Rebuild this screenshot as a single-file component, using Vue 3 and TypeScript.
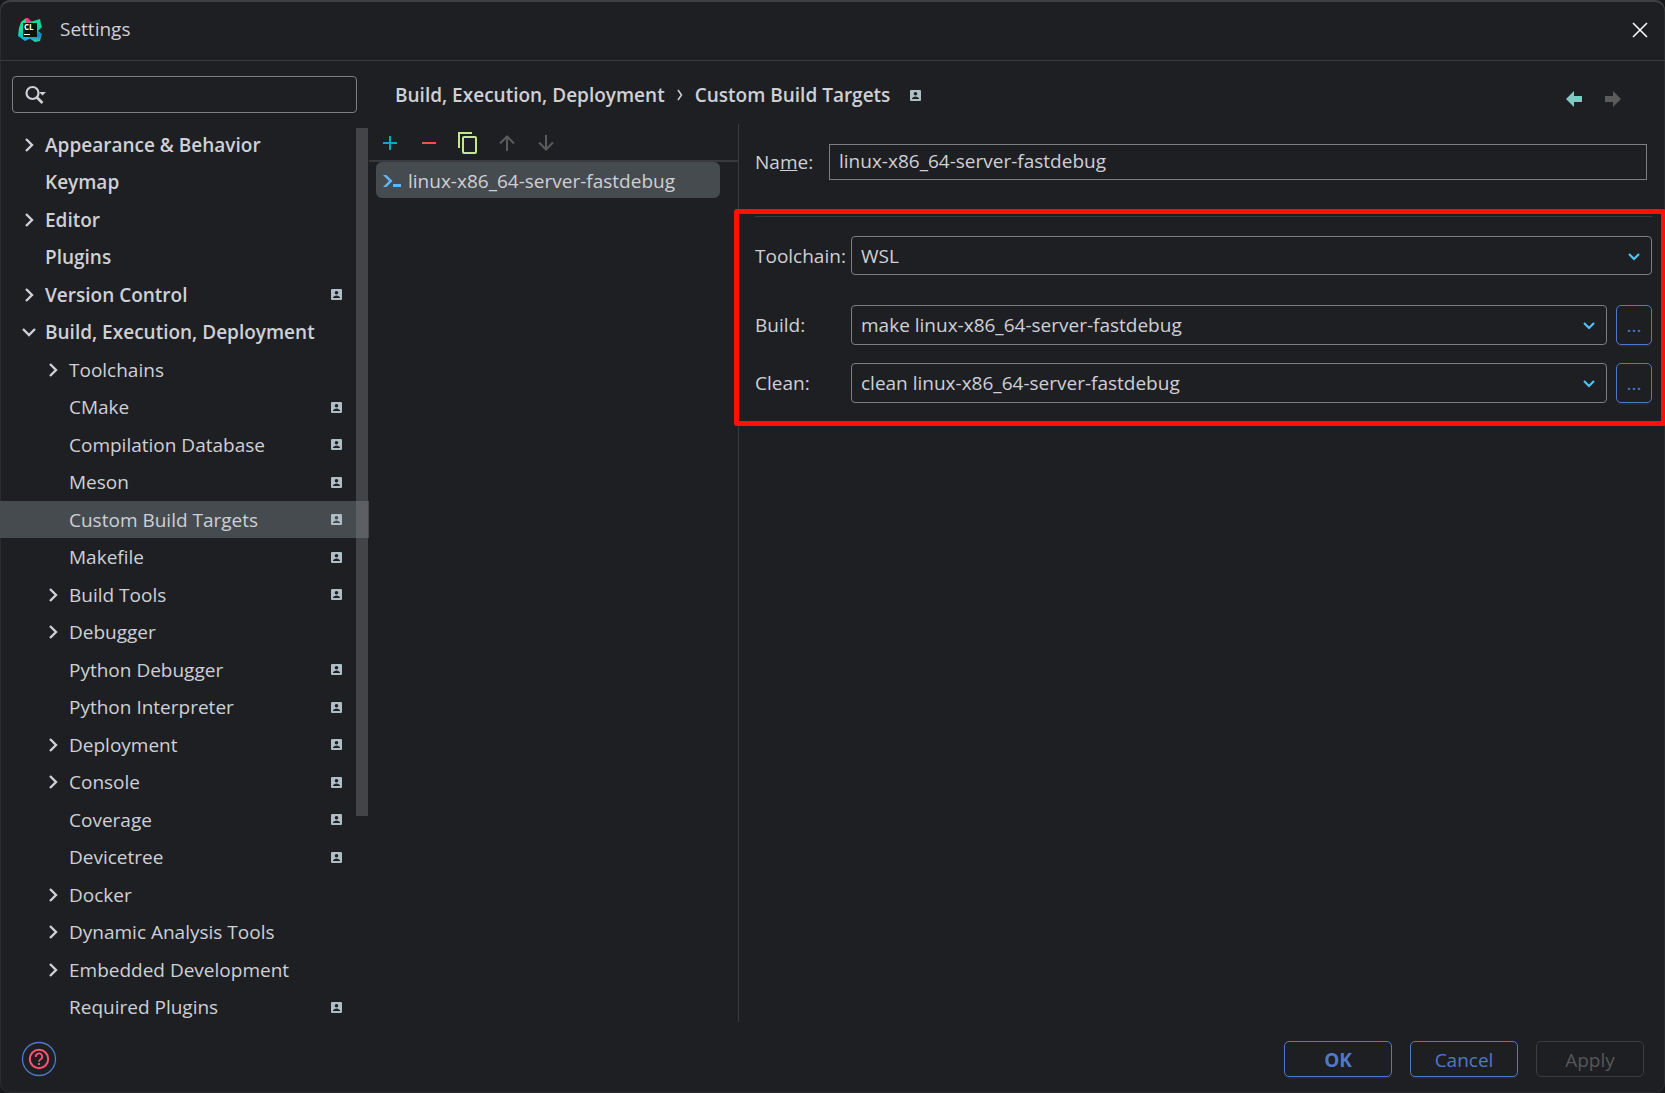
<script setup lang="ts">
import { ref } from 'vue'

interface TreeItem {
  label: string
  level: 0 | 1
  arrow?: 'open' | 'closed'
  badge?: boolean
}

const items: TreeItem[] = [
  { label: 'Appearance & Behavior', level: 0, arrow: 'closed' },
  { label: 'Keymap', level: 0 },
  { label: 'Editor', level: 0, arrow: 'closed' },
  { label: 'Plugins', level: 0 },
  { label: 'Version Control', level: 0, arrow: 'closed', badge: true },
  { label: 'Build, Execution, Deployment', level: 0, arrow: 'open' },
  { label: 'Toolchains', level: 1, arrow: 'closed' },
  { label: 'CMake', level: 1, badge: true },
  { label: 'Compilation Database', level: 1, badge: true },
  { label: 'Meson', level: 1, badge: true },
  { label: 'Custom Build Targets', level: 1, badge: true },
  { label: 'Makefile', level: 1, badge: true },
  { label: 'Build Tools', level: 1, arrow: 'closed', badge: true },
  { label: 'Debugger', level: 1, arrow: 'closed' },
  { label: 'Python Debugger', level: 1, badge: true },
  { label: 'Python Interpreter', level: 1, badge: true },
  { label: 'Deployment', level: 1, arrow: 'closed', badge: true },
  { label: 'Console', level: 1, arrow: 'closed', badge: true },
  { label: 'Coverage', level: 1, badge: true },
  { label: 'Devicetree', level: 1, badge: true },
  { label: 'Docker', level: 1, arrow: 'closed' },
  { label: 'Dynamic Analysis Tools', level: 1, arrow: 'closed' },
  { label: 'Embedded Development', level: 1, arrow: 'closed' },
  { label: 'Required Plugins', level: 1, badge: true },
]

const selected = ref('Custom Build Targets')
const query = ref('')
const name = ref('linux-x86_64-server-fastdebug')
const toolchain = ref('WSL')
const commands = ref([
  { id: 'build', label: 'Build:', value: 'make linux-x86_64-server-fastdebug' },
  { id: 'clean', label: 'Clean:', value: 'clean linux-x86_64-server-fastdebug' },
])
</script>

<template>
  <div class="window">
    <header class="titlebar">
      <svg class="logo" viewBox="0 0 24 24" aria-hidden="true">
        <defs>
          <linearGradient id="lg-left" x1="0" y1="0" x2="0" y2="1">
            <stop offset="0" stop-color="#21e07c" />
            <stop offset="0.55" stop-color="#16dca0" />
            <stop offset="1" stop-color="#12a5ee" />
          </linearGradient>
          <linearGradient id="lg-right" x1="0" y1="0" x2="0" y2="1">
            <stop offset="0" stop-color="#1fdc86" />
            <stop offset="0.5" stop-color="#14c6a0" />
            <stop offset="0.7" stop-color="#0a7fe0" />
            <stop offset="1" stop-color="#1fe3a0" />
          </linearGradient>
        </defs>
        <path d="M3 4 L8 0 L13 4 L13 20 L7 23 L0 18 L1 10 Z" fill="url(#lg-left)" />
        <path d="M12 4 L22 1 L23 6 L24 9 L20 13 L24 16 L22 23 L17 24 L11 20 Z" fill="url(#lg-right)" />
        <path d="M8 0 L10 0 L14 4 L8 5 Z" fill="#ff318c" />
        <rect x="5" y="5" width="14" height="14" fill="#061410" />
        <text x="6" y="12" class="logo-text">CL</text>
        <rect x="6" y="16" width="6" height="1" fill="#fff" />
      </svg>
      <h1 class="title">Settings</h1>
      <button class="icon-btn close" aria-label="Close">
        <svg width="16" height="16" viewBox="0 0 16 16"><path d="M1 1 L15 15 M15 1 L1 15" stroke="#fff" stroke-width="1.5" /></svg>
      </button>
    </header>

    <div class="body">
      <aside class="sidebar">
        <div class="search">
          <svg width="22" height="20" viewBox="0 0 22 20" aria-hidden="true">
            <circle cx="7.5" cy="8" r="6" fill="none" stroke="#ced0d6" stroke-width="2.2" />
            <path d="M11.5 12 L17.500 18" stroke="#ced0d6" stroke-width="2.600" />
            <path d="M14 7 H21 L17.500 10.500 Z" fill="#ced0d6" />
          </svg>
          <input v-model="query" type="search" aria-label="Search settings" />
        </div>
        <div class="tree-area">
          <ul class="tree">
            <li v-for="item in items" :key="item.label">
              <button
                class="row"
                :class="{ child: item.level === 1, selected: item.label === selected }"
                @click="selected = item.label"
              >
                <span class="arrow">
                  <svg v-if="item.arrow" width="14" height="14" viewBox="0 0 14 14" :class="{ open: item.arrow === 'open' }">
                    <path d="M4 1 L10 7 L4 13" fill="none" stroke="#ced0d6" stroke-width="2.400" />
                  </svg>
                </span>
                <span class="row-label">{{ item.label }}</span>
                <svg v-if="item.badge" class="badge" viewBox="0 0 11 11">
                  <path
                    fill-rule="evenodd"
                    d="M1 0 H10 Q11 0 11 1 V10 Q11 11 10 11 H1 Q0 11 0 10 V1 Q0 0 1 0 Z M5.500 2 A1.800 1.800 0 1 0 5.500 5.600 A1.800 1.800 0 1 0 5.500 2 Z M2 9 H9 V8.200 Q7.500 6.600 5.500 6.600 Q3.500 6.600 2 8.200 Z"
                    fill="#afbdc4"
                  />
                </svg>
              </button>
            </li>
          </ul>
          <div class="scrollbar"></div>
        </div>
      </aside>

      <main class="main">
        <div class="crumbs">
          <h2>Build, Execution, Deployment</h2>
          <svg width="6" height="12" viewBox="0 0 6 12" aria-hidden="true">
            <path d="M1 1 L4.500 6 L1 11" fill="none" stroke="#ced0d6" stroke-width="1.5" />
          </svg>
          <h2>Custom Build Targets</h2>
          <svg class="badge" viewBox="0 0 11 11" aria-hidden="true">
            <path
              fill-rule="evenodd"
              d="M1 0 H10 Q11 0 11 1 V10 Q11 11 10 11 H1 Q0 11 0 10 V1 Q0 0 1 0 Z M5.500 2 A1.800 1.800 0 1 0 5.500 5.600 A1.800 1.800 0 1 0 5.500 2 Z M2 9 H9 V8.200 Q7.500 6.600 5.500 6.600 Q3.500 6.600 2 8.200 Z"
              fill="#afbdc4"
            />
          </svg>
          <div class="history">
            <button class="icon-btn" aria-label="Back">
              <svg width="16" height="16" viewBox="0 0 16 16"><path d="M0 8 L8 0 V5 H16 V11 H8 V16 Z" fill="#80cbc4" /></svg>
            </button>
            <button class="icon-btn" aria-label="Forward" disabled>
              <svg width="16" height="16" viewBox="0 0 16 16"><path d="M16 8 L8 0 V5 H0 V11 H8 V16 Z" fill="#5b5b5b" /></svg>
            </button>
          </div>
        </div>

        <div class="panes">
          <section class="targets">
            <div class="toolbar">
              <button class="icon-btn" aria-label="Add">
                <svg width="22" height="22" viewBox="0 0 22 22"><path d="M4 11 H18 M11 4 V18" stroke="#00acc1" stroke-width="2" /></svg>
              </button>
              <button class="icon-btn" aria-label="Remove">
                <svg width="22" height="22" viewBox="0 0 22 22"><path d="M4 11 H18" stroke="#ef5350" stroke-width="2" /></svg>
              </button>
              <button class="icon-btn" aria-label="Copy">
                <svg width="22" height="22" viewBox="0 0 22 22">
                  <path d="M2 16 V1 H15" fill="none" stroke="#c3e887" stroke-width="2" />
                  <rect x="6" y="5" width="13" height="16" rx="1" fill="none" stroke="#c3e887" stroke-width="2" />
                </svg>
              </button>
              <button class="icon-btn" aria-label="Move up" disabled>
                <svg width="22" height="22" viewBox="0 0 22 22"><path d="M11 19 V5 M4 11.500 L11 4.500 L18 11.500" fill="none" stroke="#5b5b5b" stroke-width="2" /></svg>
              </button>
              <button class="icon-btn" aria-label="Move down" disabled>
                <svg width="22" height="22" viewBox="0 0 22 22"><path d="M11 3 V17 M4 10.500 L11 17.500 L18 10.500" fill="none" stroke="#5b5b5b" stroke-width="2" /></svg>
              </button>
            </div>
            <button class="target">
              <svg width="18" height="14" viewBox="0 0 18 14" aria-hidden="true">
                <path d="M0 1 H3.500 L9.500 7 L3.500 13 H0 L6 7 Z" fill="#64b5f6" />
                <rect x="10" y="10" width="8" height="3" fill="#64b5f6" />
              </svg>
              <span>{{ name }}</span>
            </button>
          </section>

          <form class="form" @submit.prevent>
            <div class="name-row">
              <label for="name">Na<u>m</u>e:</label>
              <input id="name" v-model="name" type="text" />
            </div>
            <div class="marked">
              <hr />
              <div class="field">
                <label for="toolchain">Toolchain:</label>
                <div class="combo">
                  <select id="toolchain" v-model="toolchain">
                    <option>WSL</option>
                  </select>
                  <svg class="caret" viewBox="0 0 12 8"><path d="M1 1 L6 6 L11 1" fill="none" stroke="#4fc3f7" stroke-width="2.200" /></svg>
                </div>
              </div>
              <div v-for="cmd in commands" :key="cmd.id" class="field command">
                <label :for="cmd.id">{{ cmd.label }}</label>
                <div class="combo">
                  <select :id="cmd.id" v-model="cmd.value">
                    <option>{{ cmd.value }}</option>
                  </select>
                  <svg class="caret" viewBox="0 0 12 8"><path d="M1 1 L6 6 L11 1" fill="none" stroke="#4fc3f7" stroke-width="2.200" /></svg>
                </div>
                <button type="button" class="browse">...</button>
              </div>
            </div>
          </form>
        </div>
      </main>
    </div>

    <footer class="footer">
      <button class="icon-btn" aria-label="Help">
        <svg width="36" height="36" viewBox="0 0 36 36">
          <circle cx="18" cy="18" r="16.500" fill="none" stroke="#5078cb" stroke-width="1.3" />
          <circle cx="18" cy="18" r="9.200" fill="none" stroke="#ff5370" stroke-width="2" />
          <path d="M14.800 16 A3.200 3.200 0 1 1 19.700 18.300 Q18 19.300 18 20.800" fill="none" stroke="#ff5370" stroke-width="1.800" />
          <rect x="17" y="22" width="2" height="2" fill="#ff5370" />
        </svg>
      </button>
      <div class="actions">
        <button class="btn default">OK</button>
        <button class="btn">Cancel</button>
        <button class="btn" disabled>Apply</button>
      </div>
    </footer>
  </div>
</template>

<style>
body {
  margin: 0;
  background: #17181a;
}
</style>

<style scoped>
.window,
.window * {
  box-sizing: border-box;
}

.window {
  display: flex;
  flex-direction: column;
  min-height: 100vh;
  overflow: hidden;
  color: #ced0d6;
  background: #1e1f23;
  border-radius: 10px;
  box-shadow: inset 0 2px 0 #3f4042, inset 0 0 0 1px #2b2c2f;
  font-family: "Open Sans", "Noto Sans", sans-serif;
  font-size: 19px;
  line-height: 26px;
}

button,
input,
select {
  font: inherit;
  color: inherit;
}

button {
  padding: 0;
  background: none;
  border: none;
}

.icon-btn {
  display: flex;
}

svg {
  display: block;
  flex: none;
}

/* Title bar */
.titlebar {
  display: flex;
  align-items: center;
  height: 61px;
  padding: 0 17px 0 18px;
  border-bottom: 1px solid #393a3d;
}

.logo {
  width: 24px;
  height: 24px;
}

.logo-text {
  font-size: 8px;
  font-weight: 700;
  fill: #fff;
}

.title {
  margin: 0 0 0 18px;
  padding-bottom: 2px;
  font-size: 19px;
  font-weight: 400;
}

.close {
  margin-left: auto;
}

.body {
  display: flex;
  flex: 1;
}

/* Settings tree */
.sidebar {
  width: 369px;
  flex: none;
  padding-top: 15px;
}

.search {
  display: flex;
  align-items: center;
  height: 37px;
  margin: 0 12px;
  padding-left: 12px;
  border: 1px solid #7d7e80;
  border-radius: 4px;
}

.search input {
  flex: 1;
  min-width: 0;
  background: none;
  border: none;
  outline: none;
}

.tree-area {
  position: relative;
  margin-top: 13px;
}

.tree {
  margin: 0;
  padding: 0;
  list-style: none;
}

.row {
  display: flex;
  align-items: center;
  width: 100%;
  height: 37px;
  padding: 0 27px 0 22px;
  font-weight: 600;
  text-align: left;
}

li:nth-child(even) .row {
  height: 38px;
}

.row.child {
  padding-left: 46px;
  font-weight: 400;
}

.row.selected {
  background: #464b4f;
}

.arrow {
  width: 23px;
}

.arrow .open {
  transform: rotate(90deg);
}

.row-label {
  flex: 1;
  white-space: nowrap;
}

.badge {
  width: 11px;
  height: 11px;
}

.scrollbar {
  position: absolute;
  top: 2px;
  right: 1px;
  width: 12px;
  height: 688px;
  background: rgba(130, 130, 135, 0.38);
}

/* Main area */
.main {
  display: flex;
  flex: 1;
  flex-direction: column;
  min-width: 0;
  padding-bottom: 4px;
}

.crumbs {
  display: flex;
  align-items: center;
  height: 63px;
  padding: 5px 44px 0 26px;
}

.crumbs h2 {
  margin: 0 12px 0 0;
  font-size: 19px;
  font-weight: 600;
  white-space: nowrap;
}

.crumbs h2 + svg {
  margin-right: 12px;
}

.crumbs .badge {
  margin-left: 8px;
}

.history {
  display: flex;
  gap: 23px;
  margin-left: auto;
  padding-top: 7px;
}

.panes {
  display: flex;
  flex: 1;
}

.targets {
  width: 370px;
  flex: none;
  border-right: 1px solid #393a3d;
}

.toolbar {
  display: flex;
  align-items: center;
  gap: 17px;
  height: 38px;
  padding: 2px 0 0 10px;
  border-bottom: 2px solid #393a3d;
}

.target {
  display: flex;
  align-items: center;
  gap: 7px;
  width: 344px;
  height: 36px;
  margin-left: 7px;
  padding: 2px 0 0 7px;
  background: #464b4f;
  border-radius: 6px;
}

/* Target form */
.form {
  flex: 1;
  min-width: 0;
}

.name-row {
  display: flex;
  align-items: center;
  margin: 20px 18px 0 16px;
}

.name-row label {
  width: 74px;
}

.name-row input {
  flex: 1;
  min-width: 0;
  height: 36px;
  padding: 0 9px 2px;
  background: none;
  border: 1px solid #7d7e80;
  outline: none;
}

.marked {
  position: relative;
  margin-top: 29px;
  padding: 7px 13px 23px 16px;
}

.marked::after {
  content: "";
  position: absolute;
  inset: 0 -1px 0 -5px;
  border: 5px solid #ff1100;
  border-radius: 3px;
  pointer-events: none;
}

.marked hr {
  margin: 0 0 19px;
  border: none;
  border-top: 1px solid #393a3d;
}

.field {
  display: flex;
  align-items: center;
}

.field label {
  width: 96px;
  flex: none;
}

.field.command {
  margin-top: 18px;
}

.field:nth-of-type(1) + .command {
  margin-top: 30px;
}

.combo {
  position: relative;
  flex: 1;
}

.combo select {
  display: block;
  width: 100%;
  height: 39px;
  padding: 0 40px 0 9px;
  background: none;
  border: 1px solid #7d7e80;
  border-radius: 4px;
  outline: none;
  appearance: none;
}

.command select,
.browse {
  height: 40px;
}

.caret {
  position: absolute;
  top: 17px;
  right: 12px;
  width: 12px;
  height: 8px;
  pointer-events: none;
}

.browse {
  width: 36px;
  margin-left: 9px;
  color: #5078cb;
  border: 1px solid #5078cb;
  border-radius: 5px;
  box-shadow: 0 2px 0 #26272c;
}

/* Footer */
.footer {
  display: flex;
  align-items: center;
  justify-content: space-between;
  height: 67px;
  padding: 0 21px 2px;
}

.actions {
  display: flex;
  gap: 18px;
}

.btn {
  width: 108px;
  height: 36px;
  padding-top: 2px;
  color: #5078cb;
  border: 1px solid #5078cb;
  border-radius: 5px;
  box-shadow: 0 2px 0 #26272c;
}

.btn.default {
  font-weight: 700;
}

.btn:disabled {
  color: #56575a;
  border-color: #3b3c3f;
  box-shadow: none;
}
</style>
